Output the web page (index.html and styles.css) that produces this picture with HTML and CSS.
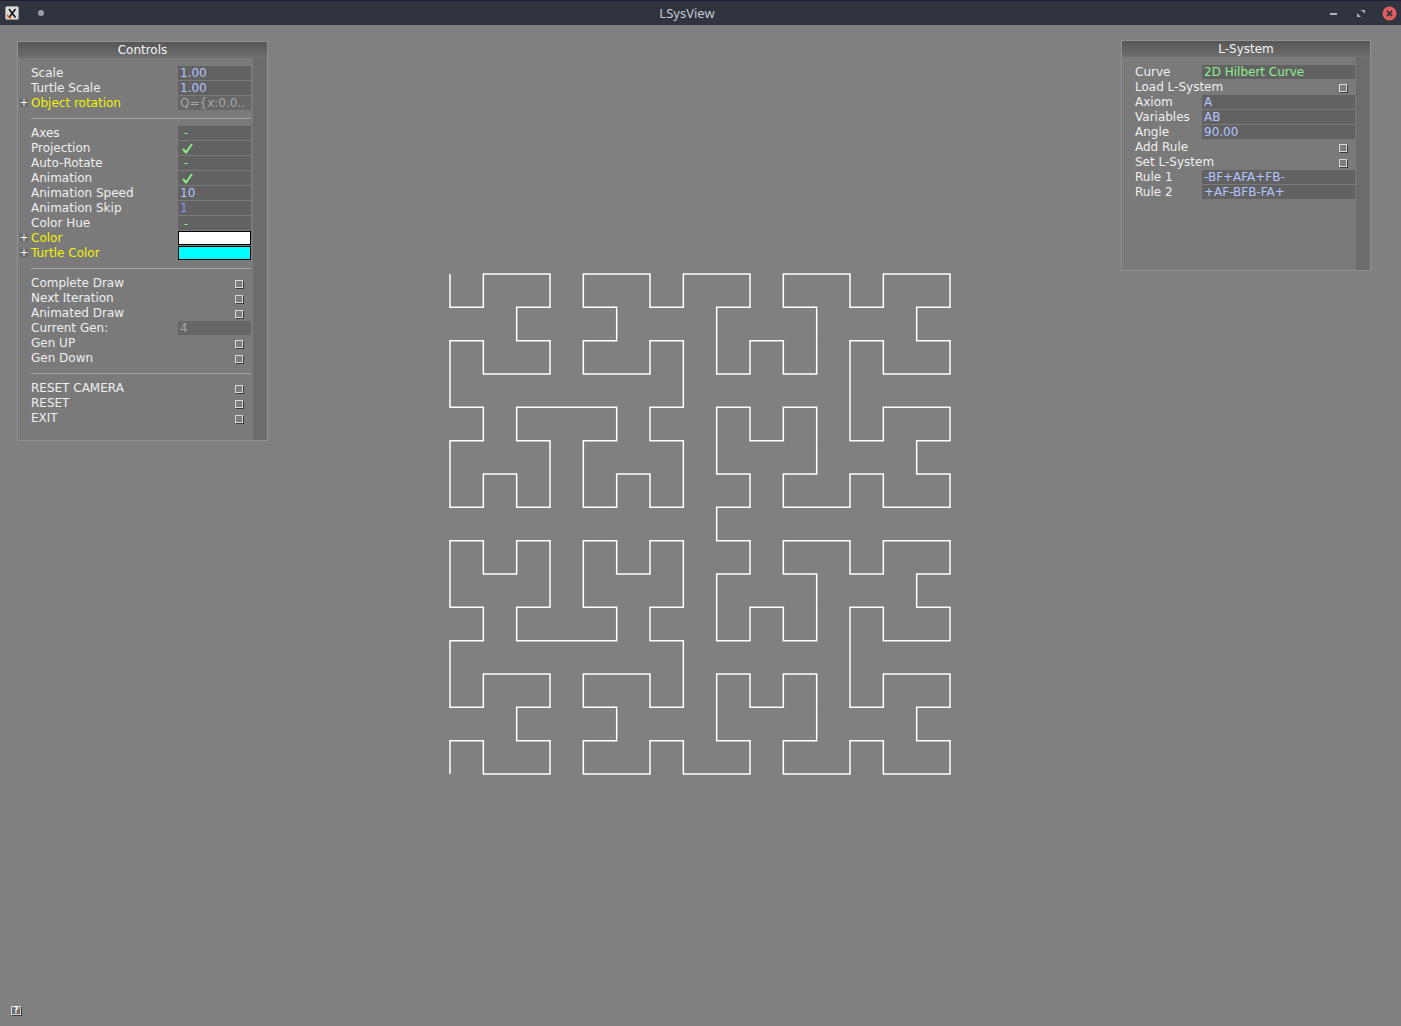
FILE: index.html
```html
<!DOCTYPE html>
<html lang="en">
<head>
<meta charset="utf-8">
<title>LSysView</title>
<link rel="stylesheet" href="styles.css">
</head>
<body>
<div class="window">
  <header class="titlebar">
    <div class="tb-left">
      <svg class="app-icon" width="14" height="14" viewBox="0 0 14 14">
        <rect x="0.5" y="0.5" width="13" height="13" rx="1.5" fill="#dcdcdc" stroke="#9a9a9a"/>
        <path d="M4 3 L10.5 11.5 M10.5 3 L4 11.5" stroke="#111" stroke-width="1.6" fill="none"/>
        <path d="M2.5 8.5 Q2.5 12 6.5 12" stroke="#e8621c" stroke-width="1.4" fill="none"/>
      </svg>
      <span class="tb-dot"></span>
    </div>
    <div class="tb-title">LSysView</div>
    <div class="tb-right">
      <span class="tb-min"></span>
      <svg class="tb-max" width="8" height="7" viewBox="0 0 8 7">
        <polygon points="3.5,0 8,0 8,3.5" fill="#a9aeb8"/>
        <polygon points="0,3 0,7 4,7" fill="#a9aeb8"/>
      </svg>
      <svg class="tb-close" width="15" height="15" viewBox="0 0 15 15">
        <circle cx="7.5" cy="7.5" r="7" fill="#e25c5e"/>
        <path d="M5 5 L10 10 M10 5 L5 10" stroke="#2f343f" stroke-width="1.8" fill="none"/>
      </svg>
    </div>
  </header>

  <main class="viewport">
    <svg class="curve" width="502" height="502" viewBox="0 0 502 502">
      <polyline id="curve-path" points="" fill="none" stroke="#ffffff" stroke-width="1.5"/>
    </svg>

    <section class="bar bar-controls">
      <div class="bar-title">Controls</div>
      <div class="bar-body">
        <div class="bar-rows">
          <div class="row"><span class="mk"></span><span class="lbl">Scale</span><span class="val num">1.00</span></div>
          <div class="row"><span class="mk"></span><span class="lbl">Turtle Scale</span><span class="val num">1.00</span></div>
          <div class="row"><span class="mk plus">+</span><span class="lbl grp">Object rotation</span><span class="val ro">Q={x:0.0..</span></div>
          <div class="sep"></div>
          <div class="row"><span class="mk"></span><span class="lbl">Axes</span><span class="val bool">-</span></div>
          <div class="row"><span class="mk"></span><span class="lbl">Projection</span><span class="val bool"><svg class="tick" width="11" height="11" viewBox="0 0 11 11"><path d="M1 6 L4 9.5 L10 1" stroke="#86f086" stroke-width="2" fill="none"/></svg></span></div>
          <div class="row"><span class="mk"></span><span class="lbl">Auto-Rotate</span><span class="val bool">-</span></div>
          <div class="row"><span class="mk"></span><span class="lbl">Animation</span><span class="val bool"><svg class="tick" width="11" height="11" viewBox="0 0 11 11"><path d="M1 6 L4 9.5 L10 1" stroke="#86f086" stroke-width="2" fill="none"/></svg></span></div>
          <div class="row"><span class="mk"></span><span class="lbl">Animation Speed</span><span class="val num">10</span></div>
          <div class="row"><span class="mk"></span><span class="lbl">Animation Skip</span><span class="val num alt">1</span></div>
          <div class="row"><span class="mk"></span><span class="lbl">Color Hue</span><span class="val bool low">-</span></div>
          <div class="row"><span class="mk plus">+</span><span class="lbl grp">Color</span><span class="val swatch swatch-white"></span></div>
          <div class="row"><span class="mk plus">+</span><span class="lbl grp">Turtle Color</span><span class="val swatch swatch-cyan"></span></div>
          <div class="sep"></div>
          <div class="row"><span class="mk"></span><span class="lbl">Complete Draw</span><span class="val cbox"><span class="cb"></span></span></div>
          <div class="row"><span class="mk"></span><span class="lbl">Next Iteration</span><span class="val cbox"><span class="cb"></span></span></div>
          <div class="row"><span class="mk"></span><span class="lbl">Animated Draw</span><span class="val cbox"><span class="cb"></span></span></div>
          <div class="row"><span class="mk"></span><span class="lbl">Current Gen:</span><span class="val ro">4</span></div>
          <div class="row"><span class="mk"></span><span class="lbl">Gen UP</span><span class="val cbox"><span class="cb"></span></span></div>
          <div class="row"><span class="mk"></span><span class="lbl">Gen Down</span><span class="val cbox"><span class="cb"></span></span></div>
          <div class="sep"></div>
          <div class="row"><span class="mk"></span><span class="lbl">RESET CAMERA</span><span class="val cbox"><span class="cb"></span></span></div>
          <div class="row"><span class="mk"></span><span class="lbl">RESET</span><span class="val cbox"><span class="cb"></span></span></div>
          <div class="row"><span class="mk"></span><span class="lbl">EXIT</span><span class="val cbox"><span class="cb"></span></span></div>
        </div>
        <div class="bar-scroll"></div>
      </div>
    </section>

    <section class="bar bar-lsys">
      <div class="bar-title">L-System</div>
      <div class="bar-body">
        <div class="bar-rows">
          <div class="row"><span class="mk"></span><span class="lbl">Curve</span><span class="val str">2D Hilbert Curve</span></div>
          <div class="row"><span class="mk"></span><span class="lbl">Load L-System</span><span class="val cbox"><span class="cb"></span></span></div>
          <div class="row"><span class="mk"></span><span class="lbl">Axiom</span><span class="val num">A</span></div>
          <div class="row"><span class="mk"></span><span class="lbl">Variables</span><span class="val num">AB</span></div>
          <div class="row"><span class="mk"></span><span class="lbl">Angle</span><span class="val num">90.00</span></div>
          <div class="row"><span class="mk"></span><span class="lbl">Add Rule</span><span class="val cbox"><span class="cb"></span></span></div>
          <div class="row"><span class="mk"></span><span class="lbl">Set L-System</span><span class="val cbox"><span class="cb"></span></span></div>
          <div class="row"><span class="mk"></span><span class="lbl">Rule 1</span><span class="val num">-BF+AFA+FB-</span></div>
          <div class="row"><span class="mk"></span><span class="lbl">Rule 2</span><span class="val num">+AF-BFB-FA+</span></div>
        </div>
        <div class="bar-scroll"></div>
      </div>
    </section>

    <div class="help-icon">?</div>
  </main>
</div>
<script src="script.js"></script>
</body>
</html>
```

FILE: styles.css
```css
* { box-sizing: border-box; }

html, body {
  margin: 0;
  padding: 0;
}

body {
  width: 1401px;
  height: 1026px;
  overflow: hidden;
  background: #808080;
  font-family: "DejaVu Sans", "Noto Sans", sans-serif;
}

.window {
  display: flex;
  flex-direction: column;
  width: 1401px;
  height: 1026px;
}

/* ---------- title bar ---------- */
.titlebar {
  flex: 0 0 25px;
  display: flex;
  align-items: center;
  background: #2f343f;
  border-top: 1px solid #1f1c3a;
  font-family: "Noto Sans", "DejaVu Sans", sans-serif;
  font-size: 13px;
  color: #c3c8d1;
}

.tb-left {
  width: 50px;
  display: flex;
  align-items: center;
  padding-left: 5px;
  gap: 19px;
}

.app-icon { display: block; }

.tb-dot {
  width: 6px;
  height: 6px;
  border-radius: 50%;
  background: #9ba0aa;
}

.tb-title {
  flex: 1;
  text-align: center;
  line-height: 24px;
}

.tb-right {
  width: 77px;
  display: flex;
  align-items: center;
  padding-left: 6px;
  padding-top: 1px;
}

.tb-min {
  width: 7px;
  height: 2px;
  background: #b0b4bd;
}

.tb-max {
  display: block;
  margin-left: 20px;
}

.tb-close {
  display: block;
  margin-left: 17px;
}

/* ---------- viewport ---------- */
.viewport {
  flex: 1;
  position: relative;
  display: flex;
  align-items: center;
  justify-content: center;
  background: #808080;
}

.curve {
  display: block;
  margin-bottom: 3px;
  margin-right: 1px;
}

/* ---------- tweak bars ---------- */
.bar {
  position: absolute;
  display: flex;
  flex-direction: column;
  background: #7a7a7a;
  border: 1px solid #919191;
  color: #f2f2f2;
  font-size: 12px;
}

.bar-controls {
  left: 17px;
  top: 16px;
  width: 251px;
  height: 400px;
  --lbl-w: 147px;
  --val-w: 73px;
  --scroll-gap: 2px;
}

.bar-lsys {
  left: 1121px;
  top: 15px;
  width: 250px;
  height: 231px;
  --lbl-w: 67px;
  --val-w: 153px;
  --scroll-gap: 1px;
}

.bar-title {
  flex: 0 0 16px;
  line-height: 16px;
  text-align: center;
  background: linear-gradient(#565656, #6f6f6f);
  color: #f4f4f4;
}

.bar-body {
  flex: 1;
  display: flex;
  gap: var(--scroll-gap);
}

.bar-rows {
  flex: 0 0 calc(13px + var(--lbl-w) + var(--val-w));
  padding-top: 8px;
}

.bar-scroll {
  flex: 1;
  background: #6c6c6c;
}

.row {
  display: grid;
  grid-template-columns: 13px var(--lbl-w) var(--val-w);
  height: 15px;
  line-height: 15px;
}

.sep {
  height: 15px;
  display: flex;
  align-items: center;
  padding-left: 13px;
}

.sep::after {
  content: "";
  flex: 1;
  height: 1px;
  background: #a3a3a3;
}

.mk {
  display: flex;
  align-items: center;
  justify-content: center;
}

.mk.plus {
  width: 8px;
  height: 8px;
  margin: 3px 0 0 2px;
  background: #6a6a6a;
  font-size: 10px;
  line-height: 8px;
  color: #ffffff;
}

.lbl {
  white-space: nowrap;
  overflow: visible;
  color: #efefef;
}

.lbl.grp { color: #f2f200; }

.val {
  height: 14px;
  line-height: 15px;
  background: #626262;
  padding-left: 2px;
  white-space: nowrap;
  overflow: hidden;
}

.val.num { color: #b2c4ff; }
.val.num.alt { color: #8e8eff; }
.val.str { color: #8cf08c; }
.val.ro { color: #a6a6a6; background: #676767; }

.val.bool {
  color: #86f086;
  padding-left: 6px;
}

.val.bool.low { line-height: 16px; }

.tick {
  display: block;
  margin: 2px 0 0 -2px;
}

.val.swatch {
  border: 1px solid #000000;
}

.swatch-white { background: #ffffff; }
.swatch-cyan { background: #00ffff; }

.val.cbox {
  background: transparent;
  display: flex;
  justify-content: flex-end;
  align-items: center;
  padding-right: 8px;
}

.cb {
  width: 8px;
  height: 8px;
  border: 1px solid #dadada;
  background: #7c7c7c;
  box-shadow: 1px 1px 0 #3a3a3a;
  margin-top: 1px;
}

/* ---------- help icon ---------- */
.help-icon {
  position: absolute;
  left: 11px;
  bottom: 11px;
  width: 10px;
  height: 9px;
  border: 1px solid #d8d8d8;
  box-shadow: 1px 1px 0 #3a3a3a;
  background: #6c6c6c;
  color: #ffffff;
  font-size: 8px;
  font-weight: bold;
  line-height: 7px;
  text-align: center;
}
```

FILE: script.js
```js
(function () {
  var rules = { A: "-BF+AFA+FB-", B: "+AF-BFB-FA+" };
  var s = "A";
  for (var i = 0; i < 4; i++) {
    var o = "";
    for (var j = 0; j < s.length; j++) {
      var c = s[j];
      o += rules[c] || c;
    }
    s = o;
  }
  var step = 500 / 15;
  var x = 1, y = 1, a = 90;
  var pts = [[x, y]];
  for (var k = 0; k < s.length; k++) {
    var ch = s[k];
    if (ch === "F") {
      x += step * Math.round(Math.cos(a * Math.PI / 180));
      y += step * Math.round(Math.sin(a * Math.PI / 180));
      pts.push([x, y]);
    } else if (ch === "+") {
      a += 90;
    } else if (ch === "-") {
      a -= 90;
    }
  }
  document.getElementById("curve-path").setAttribute(
    "points",
    pts.map(function (p) { return p[0].toFixed(2) + "," + p[1].toFixed(2); }).join(" ")
  );
})();
```
